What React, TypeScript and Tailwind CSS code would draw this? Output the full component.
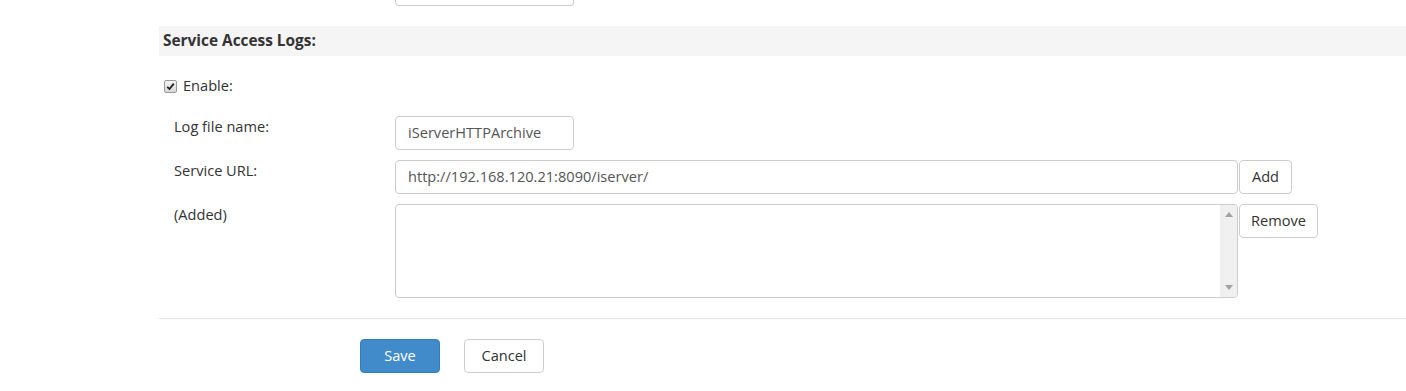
import React from "react";

const font = "font-['Open_Sans','Liberation_Sans',sans-serif]";

function FakeCheckbox() {
  return (
    <span className="inline-flex h-[13px] w-[13px] items-center justify-center rounded-[2px] border border-[#9a9a9a] bg-gradient-to-b from-[#f4f4f4] to-[#d8d8d8]">
      <svg width="9" height="9" viewBox="0 0 9 9">
        <path d="M1.2 4.8 L3.5 7 L7.8 1.6" fill="none" stroke="#222" strokeWidth="1.8" />
      </svg>
    </span>
  );
}

function Row({ label, children }: { label: string; children: React.ReactNode }) {
  return (
    <div className="flex">
      <div className="w-[236px] shrink-0 pl-[15px] leading-5 text-[#333]">{label}</div>
      <div className="flex items-start">{children}</div>
    </div>
  );
}

export default function App() {
  return (
    <div className={`${font} min-h-[391px] bg-white text-[14.6px] text-[#333]`}>
      <div className="ml-[159px]">
        {/* tail of the input above */}
        <div className="ml-[236px] h-[6px] w-[179px] rounded-b-[4px] border-x border-b border-[#ccc]" />

        <div className="mt-[20px] flex h-[30px] items-center bg-[#f5f5f5] pl-[4px] text-[15.4px] font-bold">
          Service Access Logs:
        </div>

        <div className="mt-[20px] flex h-5 items-center pl-[5px]">
          <FakeCheckbox />
          <span className="ml-[6px]">Enable:</span>
        </div>

        <div className="mt-[20px] flex flex-col gap-[10px]">
          <Row label="Log file name:">
            <div className="flex h-[34px] w-[179px] items-center rounded-[4px] border border-[#ccc] px-[12px] text-[#555]">
              iServerHTTPArchive
            </div>
          </Row>
          <Row label="Service URL:">
            <div className="flex h-[34px] w-[843px] items-center rounded-[4px] border border-[#ccc] px-[12px] text-[#555]">
              http://192.168.120.21:8090/iserver/
            </div>
            <button className="ml-px h-[34px] w-[53px] rounded-[4px] border border-[#ccc] bg-white text-[#333]">
              Add
            </button>
          </Row>
          <Row label="(Added)">
            <div className="flex h-[94px] w-[843px] justify-end overflow-hidden rounded-[4px] border border-[#ccc] bg-white">
              <div className="flex w-[17px] flex-col items-center justify-between bg-[#f0f0f0] py-[7px]">
                <svg width="8" height="5" viewBox="0 0 8 5">
                  <path d="M0 5 L4 0 L8 5 Z" fill="#a3a3a3" />
                </svg>
                <svg width="8" height="5" viewBox="0 0 8 5">
                  <path d="M0 0 L4 5 L8 0 Z" fill="#a3a3a3" />
                </svg>
              </div>
            </div>
            <button className="ml-px h-[34px] w-[79px] rounded-[4px] border border-[#ccc] bg-white text-[#333]">
              Remove
            </button>
          </Row>
        </div>

        <div className="mt-[20px] h-px bg-[#e5e5e5]" />

        <div className="mt-[20px] flex pl-[201px]">
          <button className="h-[34px] w-[80px] rounded-[4px] border border-[#357ebd] bg-[#428bca] text-white">
            Save
          </button>
          <button className="ml-[24px] h-[34px] w-[80px] rounded-[4px] border border-[#ccc] bg-white text-[#333]">
            Cancel
          </button>
        </div>
      </div>
    </div>
  );
}
